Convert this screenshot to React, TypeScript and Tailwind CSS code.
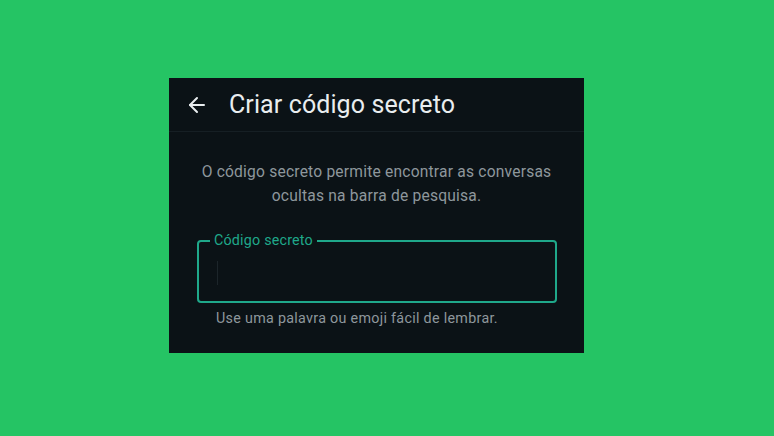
import { ArrowLeft } from 'lucide-react'

// Tela "Criar código secreto" (tema escuro) sobre fundo verde.
export default function App() {
  return (
    <div
      className="w-full h-[436px] bg-[#25c464] pl-[169px] pt-[78px]"
      style={{ fontFamily: 'Roboto, "Noto Sans", sans-serif' }}
    >
      <div className="w-[415px] h-[275px] bg-[#0b1216] flex flex-col">
        <div className="h-[54px] flex items-center pl-[16px] border-b border-[#161f24]">
          <ArrowLeft className="w-[24px] h-[24px] text-[#e9edef]" strokeWidth={2} />
          <span className="ml-[20px] text-[25px] leading-none text-[#e9edef] tracking-[0.1px]">
            Criar código secreto
          </span>
        </div>

        <p className="mt-[28px] px-2 text-center text-[15.6px] leading-[24px] text-[#8e979c] tracking-[0.2px]">
          O código secreto permite encontrar as conversas
          <br />
          ocultas na barra de pesquisa.
        </p>

        <div className="relative mt-[32px] ml-[28px] w-[360px] h-[63px] rounded-[4px] border-2 border-[#1fa88a]">
          <span className="absolute -top-[11px] left-[11px] px-[4px] bg-[#0b1216] text-[14.3px] leading-[18px] text-[#1fa88a] tracking-[0.2px]">
            Código secreto
          </span>
          <div className="absolute left-[18px] top-[19px] w-px h-[24px] bg-[#1c252a]" />
        </div>

        <p className="mt-[5px] ml-[47px] text-[14.3px] leading-[20px] text-[#8e979c] tracking-[0.3px]">
          Use uma palavra ou emoji fácil de lembrar.
        </p>
      </div>
    </div>
  )
}
